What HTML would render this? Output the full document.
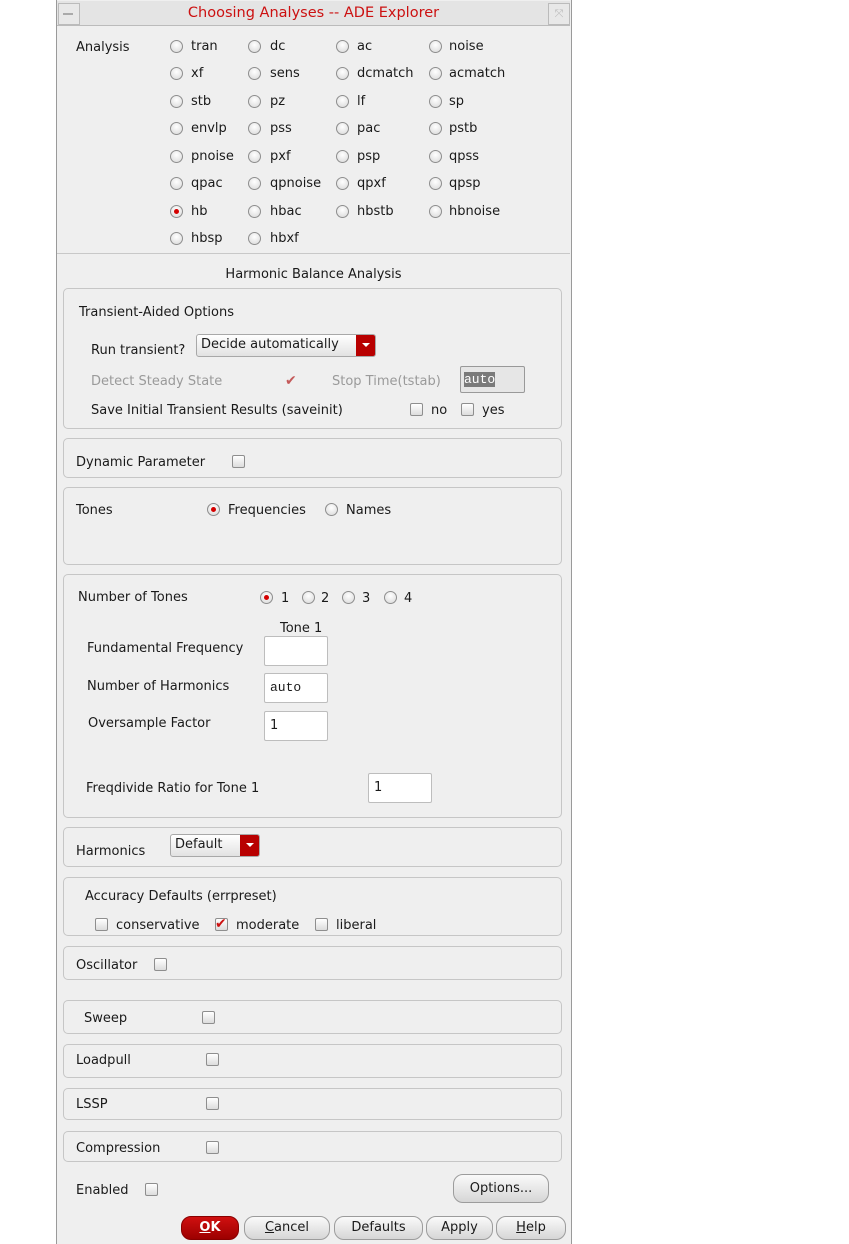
<!DOCTYPE html>
<html><head><meta charset="utf-8"><style>
body{margin:0;width:849px;height:1244px;background:#fff;position:relative;overflow:hidden;font-family:"DejaVu Sans","Liberation Sans",sans-serif;font-size:13px;color:#1a1a1a}
.win{position:absolute;left:56px;top:0;width:514px;height:1244px;background:#efefef;border-left:1px solid #9a9a9a;border-right:1px solid #9a9a9a}
.t{position:absolute;line-height:16px;white-space:nowrap;margin-top:1px}
.g{color:#9a9a9a}
.r{position:absolute;width:11px;height:11px;border-radius:50%;border:1px solid #8e8e8e;background:radial-gradient(circle at 50% 35%,#fff,#d8d8d8);box-sizing:content-box}
.r.on::after{content:"";position:absolute;left:3px;top:3px;width:5px;height:5px;border-radius:50%;background:#d40000}
.c{position:absolute;width:11px;height:11px;border:1px solid #8e8e8e;border-radius:2px;background:linear-gradient(#fff,#dcdcdc)}
.box{position:absolute;left:63px;width:497px;border:1px solid #c6c6c6;border-radius:5px}
.in{position:absolute;background:#fff;border:1px solid #bdbdbd;border-radius:2px;box-sizing:border-box;padding:0 5px;line-height:28px}
.dd{position:absolute;height:23px;border:1px solid #a8a8a8;border-radius:3px;background:linear-gradient(#fff,#e2e2e2);box-sizing:border-box;padding-left:4px;line-height:20px;overflow:hidden}
.dd b{position:absolute;right:0;top:0;width:19px;height:100%;background:#b80000}
.dd b::after{content:"";position:absolute;left:6px;top:8px;border-left:4px solid transparent;border-right:4px solid transparent;border-top:4px solid #fff}
.btn{position:absolute;border:1px solid #9c9c9c;border-radius:10px;background:linear-gradient(#fafafa,#d6d6d6);text-align:center;box-sizing:border-box}
</style></head><body>
<div class="win"></div>
<div style="position:absolute;left:57px;top:1px;width:513px;height:24px;background:#e4e4e4;border-bottom:1px solid #bbb"></div>
<div style="position:absolute;left:58px;top:3px;width:20px;height:20px;border:1px solid #bbb;background:#e8e8e8"></div>
<div style="position:absolute;left:63px;top:13px;width:10px;height:2px;background:#aaa"></div>
<div style="position:absolute;left:548px;top:3px;width:20px;height:20px;border:1px solid #bbb;background:#e8e8e8;color:#bbb;font-size:11px;text-align:center;line-height:20px">⤧</div>
<div class="t" style="left:0;width:627px;text-align:center;top:4px;font-size:14.5px;color:#cc1111">Choosing Analyses -- ADE Explorer</div>

<div class="t" style="left:76px;top:39px">Analysis</div>
<div class="r" style="left:170px;top:40px"></div><div class="t" style="left:191px;top:38px">tran</div>
<div class="r" style="left:248px;top:40px"></div><div class="t" style="left:270px;top:38px">dc</div>
<div class="r" style="left:336px;top:40px"></div><div class="t" style="left:357px;top:38px">ac</div>
<div class="r" style="left:429px;top:40px"></div><div class="t" style="left:449px;top:38px">noise</div>

<div class="r" style="left:170px;top:67px"></div><div class="t" style="left:191px;top:65px">xf</div>
<div class="r" style="left:248px;top:67px"></div><div class="t" style="left:270px;top:65px">sens</div>
<div class="r" style="left:336px;top:67px"></div><div class="t" style="left:357px;top:65px">dcmatch</div>
<div class="r" style="left:429px;top:67px"></div><div class="t" style="left:449px;top:65px">acmatch</div>

<div class="r" style="left:170px;top:95px"></div><div class="t" style="left:191px;top:93px">stb</div>
<div class="r" style="left:248px;top:95px"></div><div class="t" style="left:270px;top:93px">pz</div>
<div class="r" style="left:336px;top:95px"></div><div class="t" style="left:357px;top:93px">lf</div>
<div class="r" style="left:429px;top:95px"></div><div class="t" style="left:449px;top:93px">sp</div>

<div class="r" style="left:170px;top:122px"></div><div class="t" style="left:191px;top:120px">envlp</div>
<div class="r" style="left:248px;top:122px"></div><div class="t" style="left:270px;top:120px">pss</div>
<div class="r" style="left:336px;top:122px"></div><div class="t" style="left:357px;top:120px">pac</div>
<div class="r" style="left:429px;top:122px"></div><div class="t" style="left:449px;top:120px">pstb</div>

<div class="r" style="left:170px;top:150px"></div><div class="t" style="left:191px;top:148px">pnoise</div>
<div class="r" style="left:248px;top:150px"></div><div class="t" style="left:270px;top:148px">pxf</div>
<div class="r" style="left:336px;top:150px"></div><div class="t" style="left:357px;top:148px">psp</div>
<div class="r" style="left:429px;top:150px"></div><div class="t" style="left:449px;top:148px">qpss</div>

<div class="r" style="left:170px;top:177px"></div><div class="t" style="left:191px;top:175px">qpac</div>
<div class="r" style="left:248px;top:177px"></div><div class="t" style="left:270px;top:175px">qpnoise</div>
<div class="r" style="left:336px;top:177px"></div><div class="t" style="left:357px;top:175px">qpxf</div>
<div class="r" style="left:429px;top:177px"></div><div class="t" style="left:449px;top:175px">qpsp</div>

<div class="r on" style="left:170px;top:205px"></div><div class="t" style="left:191px;top:203px">hb</div>
<div class="r" style="left:248px;top:205px"></div><div class="t" style="left:270px;top:203px">hbac</div>
<div class="r" style="left:336px;top:205px"></div><div class="t" style="left:357px;top:203px">hbstb</div>
<div class="r" style="left:429px;top:205px"></div><div class="t" style="left:449px;top:203px">hbnoise</div>

<div class="r" style="left:170px;top:232px"></div><div class="t" style="left:191px;top:230px">hbsp</div>
<div class="r" style="left:248px;top:232px"></div><div class="t" style="left:270px;top:230px">hbxf</div>

<div style="position:absolute;left:57px;top:253px;width:513px;height:1px;background:#c8c8c8"></div>
<div class="t" style="left:57px;width:513px;text-align:center;top:266px">Harmonic Balance Analysis</div>

<div class="box" style="top:288px;height:139px"></div>
<div class="t" style="left:79px;top:304px">Transient-Aided Options</div>
<div class="t" style="left:91px;top:342px">Run transient?</div>
<div class="dd" style="left:196px;top:334px;width:180px">Decide automatically<b></b></div>
<div class="t g" style="left:91px;top:373px">Detect Steady State</div>
<div class="t" style="left:285px;top:372px;color:#c45a5a;font-size:14px">✔</div>
<div class="t g" style="left:332px;top:373px">Stop Time(tstab)</div>
<div class="in" style="left:460px;top:366px;width:65px;height:27px;background:#e6e6e6;border-color:#999;line-height:25px;padding-left:3px"><span style="background:#7a7a7a;color:#fff;font-family:'Liberation Mono',monospace">auto</span></div>
<div class="t" style="left:91px;top:402px">Save Initial Transient Results (saveinit)</div>
<div class="c" style="left:410px;top:403px"></div><div class="t" style="left:431px;top:402px">no</div>
<div class="c" style="left:461px;top:403px"></div><div class="t" style="left:482px;top:402px">yes</div>

<div class="box" style="top:438px;height:38px"></div>
<div class="t" style="left:76px;top:454px">Dynamic Parameter</div>
<div class="c" style="left:232px;top:455px"></div>

<div class="box" style="top:487px;height:76px"></div>
<div class="t" style="left:76px;top:502px">Tones</div>
<div class="r on" style="left:207px;top:503px"></div><div class="t" style="left:228px;top:502px">Frequencies</div>
<div class="r" style="left:325px;top:503px"></div><div class="t" style="left:346px;top:502px">Names</div>

<div class="box" style="top:574px;height:242px"></div>
<div class="t" style="left:78px;top:589px">Number of Tones</div>
<div class="r on" style="left:260px;top:591px"></div><div class="t" style="left:281px;top:590px">1</div>
<div class="r" style="left:302px;top:591px"></div><div class="t" style="left:321px;top:590px">2</div>
<div class="r" style="left:342px;top:591px"></div><div class="t" style="left:362px;top:590px">3</div>
<div class="r" style="left:384px;top:591px"></div><div class="t" style="left:404px;top:590px">4</div>
<div class="t" style="left:280px;top:620px">Tone 1</div>
<div class="t" style="left:87px;top:640px">Fundamental Frequency</div>
<div class="in" style="left:264px;top:636px;width:64px;height:30px"></div>
<div class="t" style="left:87px;top:678px">Number of Harmonics</div>
<div class="in" style="left:264px;top:673px;width:64px;height:30px;font-family:'Liberation Mono',monospace">auto</div>
<div class="t" style="left:88px;top:715px">Oversample Factor</div>
<div class="in" style="left:264px;top:711px;width:64px;height:30px">1</div>
<div class="t" style="left:86px;top:780px">Freqdivide Ratio for Tone 1</div>
<div class="in" style="left:368px;top:773px;width:64px;height:30px">1</div>

<div class="box" style="top:827px;height:38px"></div>
<div class="t" style="left:76px;top:843px">Harmonics</div>
<div class="dd" style="left:170px;top:834px;width:90px">Default<b></b></div>

<div class="box" style="top:877px;height:57px"></div>
<div class="t" style="left:85px;top:888px">Accuracy Defaults (errpreset)</div>
<div class="c" style="left:95px;top:918px"></div><div class="t" style="left:116px;top:917px">conservative</div>
<div class="c" style="left:215px;top:918px"></div><div class="t" style="left:215px;top:915px;color:#cc1111;font-size:14px">✔</div><div class="t" style="left:236px;top:917px">moderate</div>
<div class="c" style="left:315px;top:918px"></div><div class="t" style="left:336px;top:917px">liberal</div>

<div class="box" style="top:946px;height:32px"></div>
<div class="t" style="left:76px;top:957px">Oscillator</div>
<div class="c" style="left:154px;top:958px"></div>

<div class="box" style="top:1000px;height:32px"></div>
<div class="t" style="left:84px;top:1010px">Sweep</div>
<div class="c" style="left:202px;top:1011px"></div>

<div class="box" style="top:1044px;height:32px"></div>
<div class="t" style="left:76px;top:1052px">Loadpull</div>
<div class="c" style="left:206px;top:1053px"></div>

<div class="box" style="top:1088px;height:30px"></div>
<div class="t" style="left:76px;top:1096px">LSSP</div>
<div class="c" style="left:206px;top:1097px"></div>

<div class="box" style="top:1131px;height:29px"></div>
<div class="t" style="left:76px;top:1140px">Compression</div>
<div class="c" style="left:206px;top:1141px"></div>

<div class="t" style="left:76px;top:1182px">Enabled</div>
<div class="c" style="left:145px;top:1183px"></div>
<div class="btn" style="left:453px;top:1174px;width:96px;height:29px;line-height:27px">Options...</div>

<div class="btn" style="left:181px;top:1216px;width:58px;height:24px;line-height:22px;background:linear-gradient(#d01010,#9c0000);border-color:#800;color:#fff;font-weight:bold"><u>O</u>K</div>
<div class="btn" style="left:244px;top:1216px;width:86px;height:24px;line-height:22px"><u>C</u>ancel</div>
<div class="btn" style="left:334px;top:1216px;width:89px;height:24px;line-height:22px">Defaults</div>
<div class="btn" style="left:426px;top:1216px;width:67px;height:24px;line-height:22px">Apply</div>
<div class="btn" style="left:496px;top:1216px;width:70px;height:24px;line-height:22px"><u>H</u>elp</div>
</body></html>
